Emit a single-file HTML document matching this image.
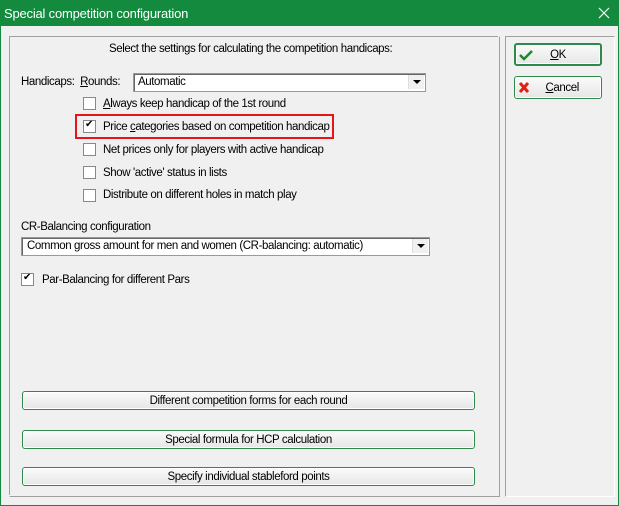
<!DOCTYPE html><html><head><style>
body{margin:0;width:619px;height:506px;background:#f0f0f0;font-family:"Liberation Sans",sans-serif;font-size:11.5px;color:#000;position:relative;overflow:hidden}
.a{position:absolute}
.t{white-space:nowrap;letter-spacing:-0.4px;margin-top:1px}
.cb{position:absolute;width:11px;height:11px;border:1px solid #888;background:#fff}
.ck{position:absolute;left:1px;top:-2px;font-size:10px}
.btn{position:absolute;border:1px solid #2e8a4a;border-radius:3px;background:linear-gradient(#fafafa,#e6e6e6);text-align:center;line-height:18px;box-shadow:inset 0 0 0 1px #fff;letter-spacing:-0.4px}
.combo{position:absolute;background:#fff;border:1px solid #999;box-shadow:inset 1px 1px 0 #666}
.arr{position:absolute;right:1px;top:1px;width:15px;height:14px;background:#f0f0f0;border-left:1px solid #ddd}
.arr:after{content:"";position:absolute;left:4px;top:5px;border-left:4px solid transparent;border-right:4px solid transparent;border-top:4px solid #000}
</style></head><body>
<div class="a" style="left:0;top:0;width:619px;height:26px;background:#138a3e"></div>
<div class="a t" style="left:4px;top:5px;color:#fff;font-size:13px;letter-spacing:-0.2px">Special competition configuration</div>
<svg class="a" style="left:598px;top:7px" width="12" height="12"><path d="M1 1L11 11M11 1L1 11" stroke="#fff" stroke-width="1.2"/></svg>
<div class="a" style="left:0;top:26px;width:1px;height:480px;background:#138a3e"></div>
<div class="a" style="left:618px;top:26px;width:1px;height:480px;background:#138a3e"></div>
<div class="a" style="left:0;top:505px;width:619px;height:1px;background:#138a3e"></div>
<div class="a" style="left:9px;top:36px;width:489px;height:459px;border-right:1px solid #a0a0a0;border-bottom:1px solid #a0a0a0;border-left:1px solid #fff;border-top:1px solid #fff"></div>
<div class="a" style="left:9px;top:36px;width:488px;height:458px;border-left:1px solid #a0a0a0;border-top:1px solid #a0a0a0"></div>
<div class="a" style="left:505px;top:36px;width:108px;height:459px;border-left:1px solid #a0a0a0;border-top:1px solid #a0a0a0;border-right:1px solid #fff;border-bottom:1px solid #fff"></div>
<div class="a t" style="left:109px;top:42px">Select the settings for calculating the competition handicaps:</div>
<div class="a t" style="left:21px;top:75px">Handicaps:&nbsp; <u>R</u>ounds:</div>
<div class="combo" style="left:133px;top:73px;width:291px;height:17px"><span class="a t" style="left:4px;top:1px">Automatic</span><div class="arr"></div></div>
<div class="cb" style="left:83px;top:97px"></div><div class="a t" style="left:103px;top:97px"><u>A</u>lways keep handicap of the 1st round</div>
<div class="a" style="left:75px;top:114px;width:255px;height:21px;border:2px solid #e8141c"></div>
<div class="cb" style="left:83px;top:120px"><span class="ck">✔</span></div><div class="a t" style="left:103px;top:120px">Price <u>c</u>ategories based on competition handicap</div>
<div class="cb" style="left:83px;top:143px"></div><div class="a t" style="left:103px;top:143px">Net prices only for players with active handicap</div>
<div class="cb" style="left:83px;top:166px"></div><div class="a t" style="left:103px;top:166px">Show 'active' status in lists</div>
<div class="cb" style="left:83px;top:189px"></div><div class="a t" style="left:103px;top:188px">Distribute on different holes in match play</div>
<div class="a t" style="left:21px;top:220px">CR-Balancing configuration</div>
<div class="combo" style="left:21px;top:237px;width:407px;height:17px"><span class="a t" style="left:5px;top:1px">Common gross amount for men and women (CR-balancing: automatic)</span><div class="arr"></div></div>
<div class="cb" style="left:21px;top:273px"><span class="ck">✔</span></div><div class="a t" style="left:42px;top:273px">Par-Balancing for different Pars</div>
<div class="btn" style="left:22px;top:391px;width:451px;height:17px">Different competition forms for each round</div>
<div class="btn" style="left:22px;top:430px;width:451px;height:17px">Special formula for HCP calculation</div>
<div class="btn" style="left:22px;top:467px;width:451px;height:17px">Specify individual stableford points</div>
<div class="btn" style="left:514px;top:43px;border-width:2px;box-sizing:border-box;width:88px;height:23px;line-height:20px"><svg style="position:absolute;left:3px;top:4px" width="14" height="12"><path d="M1 6L5 10L13 2" stroke="#1a8a2a" stroke-width="2.5" fill="none"/></svg><u>O</u>K</div>
<div class="btn" style="left:514px;top:76px;width:88px;height:23px;box-sizing:border-box;line-height:22px"><svg style="position:absolute;left:3px;top:4px" width="12" height="13"><path d="M2 2L10 11M10 2L2 11" stroke="#e02010" stroke-width="3"/></svg>&nbsp;&nbsp;&nbsp;<u>C</u>ancel</div>
</body></html>
